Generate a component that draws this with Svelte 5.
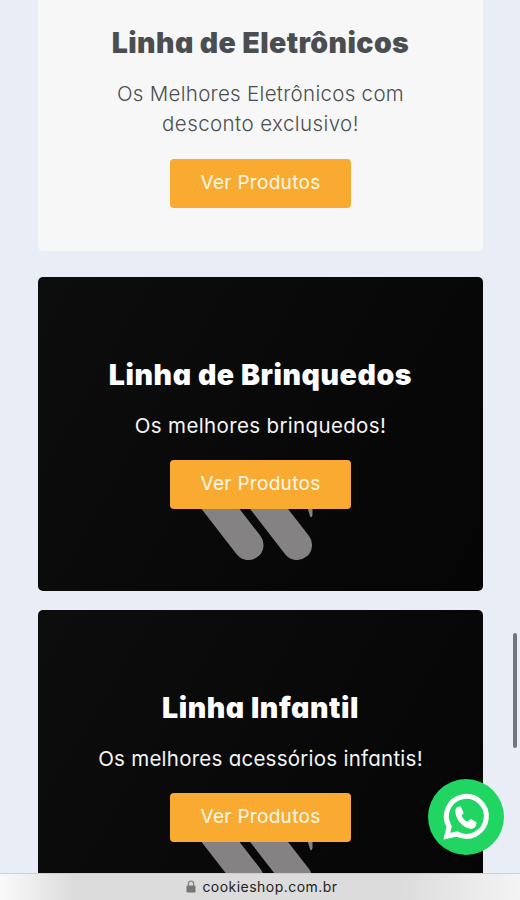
<script lang="ts">
  type Line = { text: string; spacing: number };
  type Section = { title: Line; lines: Line[]; dark: boolean };

  const sections: Section[] = [
    {
      title: { text: 'Linha de Eletrônicos', spacing: 0.4 },
      lines: [
        { text: 'Os Melhores Eletrônicos com', spacing: 0.3 },
        { text: 'desconto exclusivo!', spacing: 0.42 },
      ],
      dark: false,
    },
    {
      title: { text: 'Linha de Brinquedos', spacing: 0.57 },
      lines: [{ text: 'Os melhores brinquedos!', spacing: 0.35 }],
      dark: true,
    },
    {
      title: { text: 'Linha Infantil', spacing: 0.55 },
      lines: [{ text: 'Os melhores acessórios infantis!', spacing: 0.25 }],
      dark: true,
    },
  ];
</script>

<div class="screen">
  <main class="page">
    {#each sections as section}
      <section class="card" class:dark={section.dark}>
        {#if section.dark}
          <svg class="mark" viewBox="0 0 120 60" aria-hidden="true">
            <path d="M10.5 -4 L48.5 45 M59 -4 L97 45" />
            <path class="tip" d="M105 0 H112.5 V15 Q111.5 19 110 16 Z" />
          </svg>
        {/if}
        <h2 style="letter-spacing: {section.title.spacing}px">{section.title.text}</h2>
        <p>
          {#each section.lines as line}
            <span style="letter-spacing: {line.spacing}px">{line.text}</span>
          {/each}
        </p>
        <button>Ver Produtos</button>
      </section>
    {/each}
  </main>

  <footer class="address">
    <svg class="lock" viewBox="0 0 10 13" aria-hidden="true">
      <path d="M2.4 6 V3.8 a2.6 2.6 0 0 1 5.2 0 V6" fill="none" stroke="#858585" stroke-width="1.3" />
      <rect x="0.5" y="5.5" width="9" height="7" rx="1.2" fill="#777" />
    </svg>
    <span>cookieshop.com.br</span>
  </footer>

  <div class="scrollbar"></div>

  <a class="whatsapp" href="#chat" aria-label="WhatsApp">
    <svg viewBox="0 0 76 76">
      <circle cx="38" cy="38" r="38" fill="#20d561" />
      <path
        d="M18.8 57.2 L21.2 47.6 A20 20 0 1 1 29 55 Z"
        fill="none"
        stroke="#fff"
        stroke-width="5"
        stroke-linejoin="miter"
      />
      <path
        d="M27.4 31 C27.6 28.6 30.4 27 32.6 27.6 L35.6 33.6 C35.6 35 33.8 36 33.8 37 C34.8 39.6 36.8 41.6 39.4 42.6 C40.6 42.4 41.4 40 42.8 40 L48.4 43.2 C48.8 46.4 47 49.4 43.6 49.8 C35.4 49.8 26.8 40 27.4 31 Z"
        fill="#fff"
      />
    </svg>
  </a>
</div>

<style>
  :global(body) {
    margin: 0;
  }
  .screen {
    position: relative;
    display: flex;
    flex-direction: column;
    width: 520px;
    height: 900px;
    overflow: hidden;
    background: #e9edf6;
    font-family: Inter, 'Liberation Sans', sans-serif;
  }
  .page {
    flex: 1;
    min-height: 0;
    display: flex;
    flex-direction: column;
    align-items: center;
    overflow: hidden;
    padding-left: 1px;
    font-feature-settings: 'cv11';
  }
  .card {
    position: relative;
    flex: none;
    display: flex;
    flex-direction: column;
    align-items: center;
    box-sizing: border-box;
    width: 445px;
    height: 251px;
    padding-top: 22px;
    margin-bottom: 26px;
    border-radius: 0 0 5px 5px;
    background: #f7f7f7;
    color: #4a4e50;
  }
  .card.dark {
    height: 314px;
    padding-top: 77px;
    margin-bottom: 19px;
    border-radius: 5px;
    background: linear-gradient(120deg, #0e0d0e, #060506);
    color: #fff;
  }
  h2 {
    position: relative;
    margin: 0;
    font-size: 28.5px;
    line-height: 42px;
    font-weight: 900;
    white-space: nowrap;
  }
  p {
    position: relative;
    display: flex;
    flex-direction: column;
    align-items: center;
    margin: 15px 0 20px;
    font-size: 20.5px;
    line-height: 30px;
    font-weight: 300;
    white-space: nowrap;
  }
  .dark p {
    font-weight: 400;
    margin-bottom: 19px;
    color: #f5f5f5;
  }
  button {
    position: relative;
    width: 181px;
    height: 49px;
    padding: 0 0 2px;
    border: 0;
    border-radius: 4px;
    background: #f9ab31;
    color: #fff8ea;
    font: 400 19px Inter, 'Liberation Sans', sans-serif;
    font-feature-settings: 'cv11';
    letter-spacing: 0.3px;
  }
  .mark {
    position: absolute;
    left: 162px;
    top: 223px;
    width: 120px;
    height: 60px;
  }
  .mark path {
    fill: none;
    stroke: #848283;
    stroke-width: 30;
    stroke-linecap: round;
  }
  .mark .tip {
    fill: #848283;
    stroke: none;
  }
  .address {
    flex: none;
    display: flex;
    justify-content: center;
    align-items: center;
    gap: 6px;
    box-sizing: border-box;
    height: 27px;
    padding: 0 0 2px 4px;
    border-top: 1px solid #cfcfd2;
    background: linear-gradient(90deg, #fafafa, #dcdcdc 75px, #dcdcdc 400px, #f4f4f4);
    color: #222;
    font-size: 14px;
    letter-spacing: 0.47px;
  }
  .lock {
    width: 10px;
    height: 13px;
  }
  .scrollbar {
    position: absolute;
    right: 3px;
    top: 633px;
    width: 4px;
    height: 115px;
    border-radius: 2px;
    background: #71767b;
  }
  .whatsapp {
    position: absolute;
    left: 428px;
    top: 779px;
    width: 76px;
    height: 76px;
    border-radius: 50%;
  }
  .whatsapp svg {
    display: block;
  }
</style>
